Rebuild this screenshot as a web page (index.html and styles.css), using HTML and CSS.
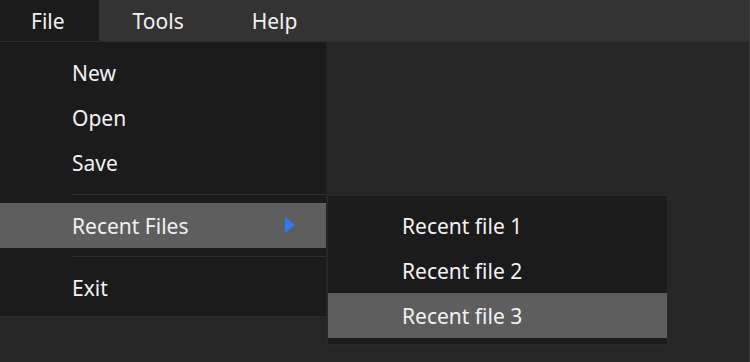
FILE: index.html
```html
<!DOCTYPE html>
<html lang="en">
<head>
    <meta charset="UTF-8">
    <meta name="viewport" content="width=device-width, initial-scale=1.0">
    <title>Menu</title>
    <link rel="stylesheet" href="styles.css">
</head>
<body>
    <div class="window">
        <div class="menubar">
            <div class="menubar-item active">File</div>
            <div class="menubar-item">Tools</div>
            <div class="menubar-item">Help</div>
        </div>

        <div class="menu">
            <div class="menu-item">New</div>
            <div class="menu-item">Open</div>
            <div class="menu-item">Save</div>
            <div class="separator sep-top"></div>
            <div class="menu-item selected">
                Recent Files
                <span class="arrow"></span>
            </div>
            <div class="separator sep-bottom"></div>
            <div class="menu-item">Exit</div>
        </div>

        <div class="submenu">
            <div class="submenu-item">Recent file 1</div>
            <div class="submenu-item">Recent file 2</div>
            <div class="submenu-item selected">Recent file 3</div>
        </div>
    </div>
</body>
</html>
```

FILE: styles.css
```css
* {
    margin: 0;
    padding: 0;
    box-sizing: border-box;
    font-family: "Noto Sans", sans-serif;
}

body {
    background-color: #262626;
    color: #f2f2f2;
}

.window {
    position: relative;
    width: 750px;
    height: 362px;
    border-right: 1px solid #3f3f3f;
    overflow: hidden;
}

.menubar {
    display: flex;
    height: 42px;
    background-color: #333333;
    border-bottom: 1px solid #2e2e2e;
}

.menubar-item {
    font-size: 21px;
    line-height: 43px;
    height: 41px;
    padding: 0 34px;
}

.menubar-item:first-child {
    padding-left: 31px;
}

.menubar-item.active {
    background-color: #1b1b1b;
}

/* dropdown under File */
.menu {
    position: absolute;
    top: 42px;
    left: 0;
    width: 327px;
    padding: 8px 0 6px;
    background-color: #1b1b1b;
    border-right: 1px solid #222222;
    border-bottom: 1px solid #2b2b2b;
}

.menu-item {
    position: relative;
    height: 45px;
    line-height: 47px;
    padding-left: 72px;
    font-size: 21px;
}

.menu-item.selected {
    background-color: #5e5e5e;
}

.arrow {
    position: absolute;
    left: 285px;
    top: 14px;
    width: 0;
    height: 0;
    border-top: 8.5px solid transparent;
    border-bottom: 8.5px solid transparent;
    border-left: 10px solid #2f7cf6;
}

.separator {
    margin-left: 72px;
    height: 1px;
    background-color: #303030;
}

.sep-top {
    margin-top: 9px;
    margin-bottom: 8px;
}

.sep-bottom {
    margin-top: 8px;
    margin-bottom: 8px;
}

/* Recent Files submenu */
.submenu {
    position: absolute;
    top: 195px;
    left: 327px;
    width: 341px;
    padding: 7px 0 6px;
    background-color: #1b1b1b;
    border: 1px solid #2a2a2a;
}

.submenu-item {
    height: 45px;
    line-height: 47px;
    padding-left: 74px;
    font-size: 21px;
}

.submenu-item.selected {
    background-color: #5e5e5e;
}
```
